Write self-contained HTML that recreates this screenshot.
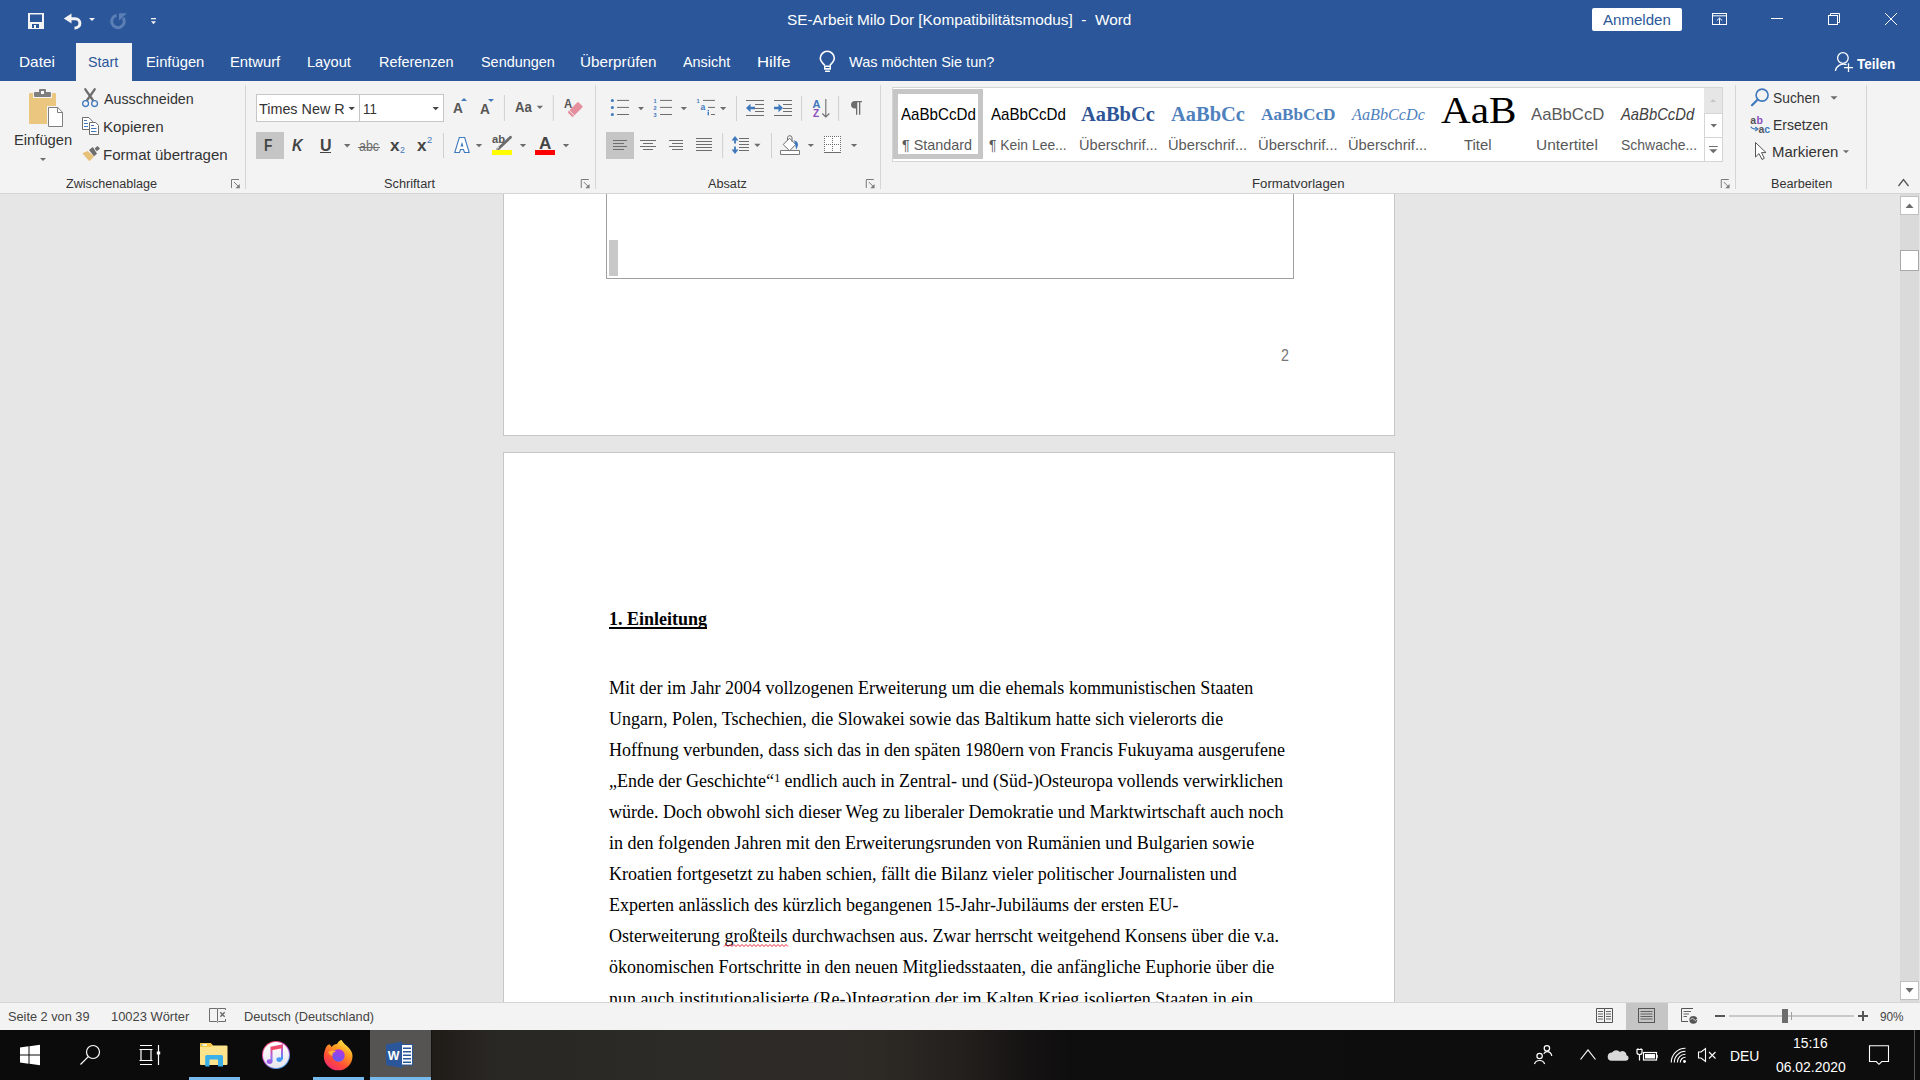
<!DOCTYPE html>
<html><head><meta charset="utf-8"><title>Word</title>
<style>
html,body{margin:0;padding:0;width:1920px;height:1080px;overflow:hidden;background:#e6e6e6;}
body{position:relative;font-family:'Liberation Sans', sans-serif;}
.t{position:absolute;white-space:pre;line-height:1;}
#docclip{position:absolute;left:0;top:194px;width:1920px;height:808px;overflow:hidden;}
#docin{position:absolute;left:0;top:-194px;width:1920px;height:1080px;}
</style></head><body>
<div style="position:absolute;left:0px;top:0px;width:1920px;height:81px;background:#2b579a;"></div><div style="position:absolute;left:76px;top:43px;width:56px;height:38px;background:#f3f3f3;"></div><div style="position:absolute;left:0px;top:81px;width:1920px;height:112px;background:#f3f3f3;"></div><div style="position:absolute;left:0px;top:193px;width:1920px;height:1px;background:#d5d5d5;"></div><div style="position:absolute;left:0px;top:194px;width:1920px;height:808px;background:#e6e6e6;"></div><div style="position:absolute;left:0px;top:1002px;width:1920px;height:1px;background:#d5d5d5;"></div><div style="position:absolute;left:0px;top:1003px;width:1920px;height:27px;background:#f3f3f3;"></div><div style="position:absolute;left:0px;top:1030px;width:1920px;height:50px;background:linear-gradient(90deg,#0b0b0b 0px,#0b0b0b 431px,#1f1b17 432px,#292724 490px,#2d2b28 700px,#2d2a26 880px,#24201d 960px,#151313 1025px,#0f0e0e 1070px,#0e0d0d 1920px);"></div><div style="position:absolute;left:1592px;top:8px;width:90px;height:23px;background:#ffffff;border-radius:2px;"></div><div style="position:absolute;left:256px;top:94px;width:104px;height:28px;background:#ffffff;box-sizing:border-box;border:1px solid #c6c6c6;"></div><div style="position:absolute;left:359px;top:94px;width:85px;height:28px;background:#ffffff;box-sizing:border-box;border:1px solid #c6c6c6;"></div><div style="position:absolute;left:256px;top:132px;width:28px;height:27px;background:#c5c5c5;"></div><div style="position:absolute;left:606px;top:132px;width:28px;height:27px;background:#c5c5c5;"></div><div style="position:absolute;left:245px;top:85px;width:1px;height:104px;background:#d5d5d5;"></div><div style="position:absolute;left:595px;top:85px;width:1px;height:104px;background:#d5d5d5;"></div><div style="position:absolute;left:880px;top:85px;width:1px;height:104px;background:#d5d5d5;"></div><div style="position:absolute;left:1735px;top:85px;width:1px;height:104px;background:#d5d5d5;"></div><div style="position:absolute;left:1866px;top:85px;width:1px;height:104px;background:#d5d5d5;"></div><div style="position:absolute;left:892px;top:87px;width:831px;height:75px;background:#ffffff;box-sizing:border-box;border:1px solid #d5d5d5;"></div><div style="position:absolute;left:893px;top:89px;width:90px;height:70px;background:transparent;box-sizing:border-box;border:5px solid #c6c6c6;"></div><div style="position:absolute;left:1704px;top:88px;width:18px;height:25px;background:#e6e6e6;"></div><div style="position:absolute;left:1704px;top:113px;width:1px;height:48px;background:#d5d5d5;"></div><div style="position:absolute;left:1704px;top:137px;width:18px;height:1px;background:#d5d5d5;"></div><div style="position:absolute;left:1704px;top:113px;width:18px;height:1px;background:#d5d5d5;"></div><div style="position:absolute;left:503px;top:194px;width:892px;height:242px;background:#ffffff;box-sizing:border-box;border:1px solid #c6c6c6;border-top:none;"></div><div style="position:absolute;left:503px;top:452px;width:892px;height:550px;background:#ffffff;box-sizing:border-box;border:1px solid #c6c6c6;border-bottom:none;"></div><div style="position:absolute;left:606px;top:194px;width:688px;height:85px;background:transparent;box-sizing:border-box;border:1px solid #a0a0a0;border-top:none;"></div><div style="position:absolute;left:609px;top:240px;width:9px;height:36px;background:#c8c8c8;"></div><div style="position:absolute;left:609px;top:627px;width:98px;height:2px;background:#000000;"></div><div style="position:absolute;left:1626px;top:1003px;width:42px;height:27px;background:#c5c5c5;"></div><div style="position:absolute;left:370px;top:1030px;width:61px;height:50px;background:#565452;"></div><div style="position:absolute;left:370px;top:1077px;width:61px;height:3px;background:#76b9ed;"></div><div style="position:absolute;left:189px;top:1077px;width:51px;height:3px;background:#76b9ed;"></div><div style="position:absolute;left:313px;top:1077px;width:51px;height:3px;background:#76b9ed;"></div><div style="position:absolute;left:320px;top:152px;width:11px;height:1.3px;background:#444444;"></div><div style="position:absolute;left:358px;top:147px;width:22px;height:1.2px;background:#6d6d6d;"></div>
<div id="docclip"><div id="docin"><div class="t" style="left:609.00px;top:610.00px;font:normal 700 18px 'Liberation Serif', serif;line-height:1;color:#000000;">1. Einleitung</div><div class="t" style="left:609.00px;top:679.00px;font:normal 400 18px 'Liberation Serif', serif;line-height:1;color:#000000;">Mit der im Jahr 2004 vollzogenen Erweiterung um die ehemals kommunistischen Staaten</div><div class="t" style="left:609.00px;top:710.05px;font:normal 400 18px 'Liberation Serif', serif;line-height:1;color:#000000;">Ungarn, Polen, Tschechien, die Slowakei sowie das Baltikum hatte sich vielerorts die</div><div class="t" style="left:609.00px;top:741.10px;font:normal 400 18px 'Liberation Serif', serif;line-height:1;color:#000000;">Hoffnung verbunden, dass sich das in den späten 1980ern von Francis Fukuyama ausgerufene</div><div class="t" style="left:609.00px;top:803.20px;font:normal 400 18px 'Liberation Serif', serif;line-height:1;color:#000000;">würde. Doch obwohl sich dieser Weg zu liberaler Demokratie und Marktwirtschaft auch noch</div><div class="t" style="left:609.00px;top:834.25px;font:normal 400 18px 'Liberation Serif', serif;line-height:1;color:#000000;">in den folgenden Jahren mit den Erweiterungsrunden von Rumänien und Bulgarien sowie</div><div class="t" style="left:609.00px;top:865.30px;font:normal 400 18px 'Liberation Serif', serif;line-height:1;color:#000000;">Kroatien fortgesetzt zu haben schien, fällt die Bilanz vieler politischer Journalisten und</div><div class="t" style="left:609.00px;top:896.35px;font:normal 400 18px 'Liberation Serif', serif;line-height:1;color:#000000;">Experten anlässlich des kürzlich begangenen 15-Jahr-Jubiläums der ersten EU-</div><div class="t" style="left:609.00px;top:927.40px;font:normal 400 18px 'Liberation Serif', serif;line-height:1;color:#000000;">Osterweiterung großteils durchwachsen aus. Zwar herrscht weitgehend Konsens über die v.a.</div><div class="t" style="left:609.00px;top:958.45px;font:normal 400 18px 'Liberation Serif', serif;line-height:1;color:#000000;">ökonomischen Fortschritte in den neuen Mitgliedsstaaten, die anfängliche Euphorie über die</div><div class="t" style="left:609.00px;top:989.50px;font:normal 400 18px 'Liberation Serif', serif;line-height:1;color:#000000;">nun auch institutionalisierte (Re-)Integration der im Kalten Krieg isolierten Staaten in ein</div><div class="t" style="left:609.00px;top:772.15px;font:normal 400 18px 'Liberation Serif', serif;line-height:1;color:#000000;">„Ende der Geschichte“</div><div class="t" style="left:774.20px;top:772.00px;font:normal 400 12px 'Liberation Serif', serif;line-height:1;color:#000000;">1</div><div class="t" style="left:784.60px;top:772.15px;font:normal 400 18px 'Liberation Serif', serif;line-height:1;color:#000000;">endlich auch in Zentral- und (Süd-)Osteuropa vollends verwirklichen</div></div></div>
<div class="t" style="left:787.00px;top:12.00px;font:normal 400 15px 'Liberation Sans', sans-serif;line-height:1;color:#ffffff;transform:scaleX(1.0233);transform-origin:0 0;">SE-Arbeit Milo Dor [Kompatibilitätsmodus]  -  Word</div><div class="t" style="left:1603.00px;top:12.00px;font:normal 400 15px 'Liberation Sans', sans-serif;line-height:1;color:#2b579a;transform:scaleX(1.0044);transform-origin:0 0;">Anmelden</div><div class="t" style="left:18.67px;top:54.00px;font:normal 400 15px 'Liberation Sans', sans-serif;line-height:1;color:#ffffff;transform:scaleX(1.0257);transform-origin:0 0;">Datei</div><div class="t" style="left:88.00px;top:54.00px;font:normal 400 15px 'Liberation Sans', sans-serif;line-height:1;color:#2b579a;transform:scaleX(0.9536);transform-origin:0 0;">Start</div><div class="t" style="left:145.72px;top:54.00px;font:normal 400 15px 'Liberation Sans', sans-serif;line-height:1;color:#ffffff;transform:scaleX(0.9849);transform-origin:0 0;">Einfügen</div><div class="t" style="left:230.31px;top:54.00px;font:normal 400 15px 'Liberation Sans', sans-serif;line-height:1;color:#ffffff;transform:scaleX(0.9865);transform-origin:0 0;">Entwurf</div><div class="t" style="left:307.33px;top:54.00px;font:normal 400 15px 'Liberation Sans', sans-serif;line-height:1;color:#ffffff;transform:scaleX(0.9739);transform-origin:0 0;">Layout</div><div class="t" style="left:378.54px;top:54.00px;font:normal 400 15px 'Liberation Sans', sans-serif;line-height:1;color:#ffffff;transform:scaleX(0.9619);transform-origin:0 0;">Referenzen</div><div class="t" style="left:480.50px;top:54.00px;font:normal 400 15px 'Liberation Sans', sans-serif;line-height:1;color:#ffffff;transform:scaleX(0.9620);transform-origin:0 0;">Sendungen</div><div class="t" style="left:579.98px;top:54.00px;font:normal 400 15px 'Liberation Sans', sans-serif;line-height:1;color:#ffffff;transform:scaleX(1.0176);transform-origin:0 0;">Überprüfen</div><div class="t" style="left:683.00px;top:54.00px;font:normal 400 15px 'Liberation Sans', sans-serif;line-height:1;color:#ffffff;transform:scaleX(0.9596);transform-origin:0 0;">Ansicht</div><div class="t" style="left:756.88px;top:54.00px;font:normal 400 15px 'Liberation Sans', sans-serif;line-height:1;color:#ffffff;transform:scaleX(1.1163);transform-origin:0 0;">Hilfe</div><div class="t" style="left:849.00px;top:54.00px;font:normal 400 15px 'Liberation Sans', sans-serif;line-height:1;color:#ffffff;transform:scaleX(0.9666);transform-origin:0 0;">Was möchten Sie tun?</div><div class="t" style="left:1857.20px;top:56.00px;font:normal 700 15px 'Liberation Sans', sans-serif;line-height:1;color:#ffffff;transform:scaleX(0.9057);transform-origin:0 0;">Teilen</div><div class="t" style="left:13.72px;top:132.00px;font:normal 400 15px 'Liberation Sans', sans-serif;line-height:1;color:#333333;transform:scaleX(0.9832);transform-origin:0 0;">Einfügen</div><div class="t" style="left:104.20px;top:91.00px;font:normal 400 15px 'Liberation Sans', sans-serif;line-height:1;color:#333333;transform:scaleX(0.9522);transform-origin:0 0;">Ausschneiden</div><div class="t" style="left:103.19px;top:119.00px;font:normal 400 15px 'Liberation Sans', sans-serif;line-height:1;color:#333333;transform:scaleX(1.0085);transform-origin:0 0;">Kopieren</div><div class="t" style="left:103.20px;top:147.00px;font:normal 400 15px 'Liberation Sans', sans-serif;line-height:1;color:#333333;transform:scaleX(1.0042);transform-origin:0 0;">Format übertragen</div><div class="t" style="left:66.10px;top:177.80px;font:normal 400 12px 'Liberation Sans', sans-serif;line-height:1;color:#333333;transform:scaleX(1.0500);transform-origin:0 0;">Zwischenablage</div><div class="t" style="left:384.00px;top:177.80px;font:normal 400 12px 'Liberation Sans', sans-serif;line-height:1;color:#333333;transform:scaleX(1.0631);transform-origin:0 0;">Schriftart</div><div class="t" style="left:708.00px;top:177.80px;font:normal 400 12px 'Liberation Sans', sans-serif;line-height:1;color:#333333;transform:scaleX(1.0563);transform-origin:0 0;">Absatz</div><div class="t" style="left:1252.00px;top:177.80px;font:normal 400 12px 'Liberation Sans', sans-serif;line-height:1;color:#333333;transform:scaleX(1.1006);transform-origin:0 0;">Formatvorlagen</div><div class="t" style="left:1770.50px;top:177.80px;font:normal 400 12px 'Liberation Sans', sans-serif;line-height:1;color:#333333;transform:scaleX(1.0546);transform-origin:0 0;">Bearbeiten</div><div class="t" style="left:259.00px;top:101.60px;font:normal 400 14px 'Liberation Sans', sans-serif;line-height:1;color:#333333;transform:scaleX(1.0255);transform-origin:0 0;">Times New R</div><div class="t" style="left:363.35px;top:101.60px;font:normal 400 14px 'Liberation Sans', sans-serif;line-height:1;color:#333333;transform:scaleX(0.9457);transform-origin:0 0;">11</div><div class="t" style="left:900.80px;top:105.60px;font:normal 400 17px 'Liberation Sans', sans-serif;line-height:1;color:#000000;transform:scaleX(0.8907);transform-origin:0 0;">AaBbCcDd</div><div class="t" style="left:902.40px;top:136.80px;font:normal 400 15px 'Liberation Sans', sans-serif;line-height:1;color:#595959;transform:scaleX(0.9593);transform-origin:0 0;">¶ Standard</div><div class="t" style="left:991.00px;top:105.60px;font:normal 400 17px 'Liberation Sans', sans-serif;line-height:1;color:#000000;transform:scaleX(0.8895);transform-origin:0 0;">AaBbCcDd</div><div class="t" style="left:989.40px;top:136.80px;font:normal 400 15px 'Liberation Sans', sans-serif;line-height:1;color:#595959;transform:scaleX(0.9254);transform-origin:0 0;">¶ Kein Lee...</div><div class="t" style="left:1081.00px;top:103.00px;font:normal 700 22px 'Liberation Serif', serif;line-height:1;color:#2e5597;transform:scaleX(0.9287);transform-origin:0 0;">AaBbCc</div><div class="t" style="left:1078.53px;top:136.80px;font:normal 400 15px 'Liberation Sans', sans-serif;line-height:1;color:#595959;transform:scaleX(0.9722);transform-origin:0 0;">Überschrif...</div><div class="t" style="left:1171.00px;top:104.00px;font:normal 700 20px 'Liberation Serif', serif;line-height:1;color:#4f81bd;transform:scaleX(1.0228);transform-origin:0 0;">AaBbCc</div><div class="t" style="left:1168.02px;top:136.80px;font:normal 400 15px 'Liberation Sans', sans-serif;line-height:1;color:#595959;transform:scaleX(0.9786);transform-origin:0 0;">Überschrif...</div><div class="t" style="left:1260.75px;top:106.00px;font:normal 700 17px 'Liberation Serif', serif;line-height:1;color:#4f81bd;transform:scaleX(1.0117);transform-origin:0 0;">AaBbCcD</div><div class="t" style="left:1258.02px;top:136.80px;font:normal 400 15px 'Liberation Sans', sans-serif;line-height:1;color:#595959;transform:scaleX(0.9849);transform-origin:0 0;">Überschrif...</div><div class="t" style="left:1351.70px;top:106.00px;font:italic 400 17px 'Liberation Serif', serif;line-height:1;color:#4f81bd;transform:scaleX(0.9528);transform-origin:0 0;">AaBbCcDc</div><div class="t" style="left:1348.02px;top:136.80px;font:normal 400 15px 'Liberation Sans', sans-serif;line-height:1;color:#595959;transform:scaleX(0.9786);transform-origin:0 0;">Überschrif...</div><div class="t" style="left:1441.00px;top:91.00px;font:normal 400 38px 'Liberation Serif', serif;line-height:1;color:#000000;transform:scaleX(1.0833);transform-origin:0 0;">AaB</div><div class="t" style="left:1463.75px;top:136.80px;font:normal 400 15px 'Liberation Sans', sans-serif;line-height:1;color:#595959;transform:scaleX(0.9928);transform-origin:0 0;">Titel</div><div class="t" style="left:1530.75px;top:106.00px;font:normal 400 17px 'Liberation Sans', sans-serif;line-height:1;color:#5a5a5a;transform:scaleX(0.9817);transform-origin:0 0;">AaBbCcD</div><div class="t" style="left:1536.47px;top:136.80px;font:normal 400 15px 'Liberation Sans', sans-serif;line-height:1;color:#595959;transform:scaleX(1.0308);transform-origin:0 0;">Untertitel</div><div class="t" style="left:1621.37px;top:106.00px;font:italic 400 17px 'Liberation Sans', sans-serif;line-height:1;color:#404040;transform:scaleX(0.8699);transform-origin:0 0;">AaBbCcDd</div><div class="t" style="left:1620.50px;top:136.80px;font:normal 400 15px 'Liberation Sans', sans-serif;line-height:1;color:#595959;transform:scaleX(0.9312);transform-origin:0 0;">Schwache...</div><div class="t" style="left:1773.00px;top:89.50px;font:normal 400 15px 'Liberation Sans', sans-serif;line-height:1;color:#333333;transform:scaleX(0.9202);transform-origin:0 0;">Suchen</div><div class="t" style="left:1772.82px;top:117.00px;font:normal 400 15px 'Liberation Sans', sans-serif;line-height:1;color:#333333;transform:scaleX(0.9291);transform-origin:0 0;">Ersetzen</div><div class="t" style="left:1772.01px;top:144.00px;font:normal 400 15px 'Liberation Sans', sans-serif;line-height:1;color:#333333;transform:scaleX(0.9947);transform-origin:0 0;">Markieren</div><div class="t" style="left:1281.00px;top:348.00px;font:normal 400 16px 'Liberation Sans', sans-serif;line-height:1;color:#767676;transform:scaleX(0.8889);transform-origin:0 0;">2</div><div class="t" style="left:8.10px;top:1009.80px;font:normal 400 13px 'Liberation Sans', sans-serif;line-height:1;color:#444444;transform:scaleX(0.9809);transform-origin:0 0;">Seite 2 von 39</div><div class="t" style="left:110.60px;top:1009.80px;font:normal 400 13px 'Liberation Sans', sans-serif;line-height:1;color:#444444;transform:scaleX(0.9933);transform-origin:0 0;">10023 Wörter</div><div class="t" style="left:244.32px;top:1009.80px;font:normal 400 13px 'Liberation Sans', sans-serif;line-height:1;color:#444444;transform:scaleX(0.9832);transform-origin:0 0;">Deutsch (Deutschland)</div><div class="t" style="left:1880.00px;top:1010.00px;font:normal 400 13px 'Liberation Sans', sans-serif;line-height:1;color:#444444;transform:scaleX(0.9070);transform-origin:0 0;">90%</div><div class="t" style="left:1730.44px;top:1048.80px;font:normal 400 14.5px 'Liberation Sans', sans-serif;line-height:1;color:#ffffff;transform:scaleX(0.9608);transform-origin:0 0;">DEU</div><div class="t" style="left:1793.35px;top:1036.40px;font:normal 400 14.5px 'Liberation Sans', sans-serif;line-height:1;color:#ffffff;transform:scaleX(0.9540);transform-origin:0 0;">15:16</div><div class="t" style="left:1776.00px;top:1059.80px;font:normal 400 14.5px 'Liberation Sans', sans-serif;line-height:1;color:#ffffff;transform:scaleX(0.9599);transform-origin:0 0;">06.02.2020</div><div class="t" style="left:264.44px;top:138.00px;font:normal 700 16px 'Liberation Sans', sans-serif;line-height:1;color:#444444;transform:scaleX(0.8556);transform-origin:0 0;">F</div><div class="t" style="left:291.90px;top:138.00px;font:italic 700 16px 'Liberation Sans', sans-serif;line-height:1;color:#444444;transform:scaleX(0.9231);transform-origin:0 0;">K</div><div class="t" style="left:320.00px;top:138.00px;font:normal 700 16px 'Liberation Sans', sans-serif;line-height:1;color:#444444;">U</div><div class="t" style="left:359.00px;top:139.00px;font:normal 400 14px 'Liberation Sans', sans-serif;line-height:1;color:#6d6d6d;transform:scaleX(0.8860);transform-origin:0 0;">abc</div><div class="t" style="left:389.80px;top:138.00px;font:normal 700 16px 'Liberation Sans', sans-serif;line-height:1;color:#444444;transform:scaleX(1.0778);transform-origin:0 0;">x</div><div class="t" style="left:399.50px;top:146.00px;font:normal 400 9px 'Liberation Sans', sans-serif;line-height:1;color:#3f78bd;transform:scaleX(0.9800);transform-origin:0 0;">2</div><div class="t" style="left:417.40px;top:138.00px;font:normal 700 16px 'Liberation Sans', sans-serif;line-height:1;color:#444444;transform:scaleX(1.0667);transform-origin:0 0;">x</div><div class="t" style="left:427.30px;top:135.80px;font:normal 400 9px 'Liberation Sans', sans-serif;line-height:1;color:#3f78bd;transform:scaleX(1.0400);transform-origin:0 0;">2</div><div class="t" style="left:453.30px;top:100.00px;font:normal 700 15px 'Liberation Sans', sans-serif;line-height:1;color:#555555;transform:scaleX(0.9091);transform-origin:0 0;">A</div><div class="t" style="left:480.40px;top:101.00px;font:normal 700 15px 'Liberation Sans', sans-serif;line-height:1;color:#555555;transform:scaleX(0.9091);transform-origin:0 0;">A</div><div class="t" style="left:514.60px;top:99.00px;font:normal 700 15px 'Liberation Sans', sans-serif;line-height:1;color:#555555;transform:scaleX(0.8773);transform-origin:0 0;">Aa</div><div class="t" style="left:564.00px;top:98.30px;font:normal 700 12px 'Liberation Sans', sans-serif;line-height:1;color:#555555;transform:scaleX(0.9444);transform-origin:0 0;">A</div><div class="t" style="left:492.40px;top:133.90px;font:normal 700 10.5px 'Liberation Sans', sans-serif;line-height:1;color:#555555;transform:scaleX(1.0642);transform-origin:0 0;">ab</div><div class="t" style="left:538.80px;top:134.60px;font:normal 700 17px 'Liberation Sans', sans-serif;line-height:1;color:#444444;transform:scaleX(1.0083);transform-origin:0 0;">A</div>
<svg width="1920" height="1080" viewBox="0 0 1920 1080" style="position:absolute;left:0;top:0"><path d="M28 13h16v16h-16z" fill="#f3f3f3"/><rect x="30" y="14.5" width="12" height="7.5" fill="#2b579a"/><rect x="32" y="24" width="7" height="4" fill="#2b579a"/><rect x="34" y="25" width="2" height="3" fill="#f3f3f3"/><path d="M63.8 18.5L71.5 13.6V23.4Z" fill="#f3f3f3"/><path d="M70 18.7H75.3A4.6 4.6 0 0 1 75.3 27.9H74.5" fill="none" stroke="#f3f3f3" stroke-width="3"/><path d="M89 18h6l-3.0 3z" fill="#f3f3f3"/><path d="M116.5 15.2A6.3 6.3 0 1 0 123.2 17.8" fill="none" stroke="#5b7eb5" stroke-width="3"/><path d="M119 13.2H126.8L119 20.8Z" fill="#5b7eb5"/><rect x="151" y="18" width="5" height="1.3" fill="#f3f3f3"/><path d="M151 21.2h5l-2.5 3z" fill="#f3f3f3"/><g fill="none" stroke="#fff" stroke-width="1"><rect x="1712.5" y="13.5" width="14" height="11"/><path d="M1712.5 15.8H1726.5"/><path d="M1719.5 25V18.2M1716.8 20.6L1719.5 18L1722.2 20.6"/><path d="M1771 18.5H1783"/><rect x="1828.5" y="15.5" width="9" height="9"/><path d="M1830.5 15.5V13.5H1839.5V22.5H1837.5"/><path d="M1885 13L1897 25M1897 13L1885 25"/></g><g fill="none" stroke="#fff" stroke-width="1.6"><path d="M824.8 65.5C822.5 63 820.3 61.2 820.3 58.3A7 7 0 0 1 834.3 58.3C834.3 61.2 832.1 63 829.8 65.5"/></g><rect x="824" y="65.5" width="7" height="4.2" fill="#fff"/><rect x="825.5" y="67" width="4" height="1" fill="#2b579a"/><rect x="825" y="70.6" width="5" height="1.5" rx="0.7" fill="#fff"/><g fill="none" stroke="#fff" stroke-width="1.3"><circle cx="1842.9" cy="58" r="5.3"/><path d="M1835.3 70.8A8.5 8.5 0 0 1 1846.5 64.6"/><path d="M1844 67.6H1853M1848.5 63.2V72"/></g><rect x="29" y="93" width="27" height="31" rx="1" fill="#ebc67f"/><rect x="33" y="91" width="19" height="7" fill="#f3f3f3"/><rect x="34" y="92" width="17" height="5" rx="1" fill="#7f7f7f"/><rect x="39" y="89" width="7" height="5" rx="1" fill="#7f7f7f"/><rect x="41" y="91" width="3" height="3" fill="#fff"/><rect x="47" y="106" width="17" height="22" fill="#f3f3f3"/><path d="M48.5 107.5H57.8L62.5 112.2V126.5H48.5Z" fill="#fff" stroke="#7f7f7f" stroke-width="1"/><path d="M57.5 107.5V112.5H62.5" fill="none" stroke="#7f7f7f" stroke-width="1"/><path d="M40 158h6l-3.0 3z" fill="#6d6d6d"/><g stroke="#6d6d6d" stroke-linecap="round"><path d="M85.3 89.3L92.8 100" stroke-width="2.3"/><path d="M94.7 89.3L87.2 100" stroke-width="2.3"/></g><g fill="none" stroke="#3f78bd" stroke-width="1.3"><circle cx="85.6" cy="103.6" r="2.9"/><circle cx="94.6" cy="103.6" r="2.9"/></g><g stroke="#6d6d6d" stroke-width="1" fill="#fff"><path d="M82.5 117.5H88.8L92.5 121.3V129.5H82.5Z"/><path d="M89.5 122.5H95.8L98.5 125.4V134.5H89.5Z"/></g><g stroke="#3f78bd" stroke-width="1"><path d="M84 120.5H87M84 123.5H88M84 126.5H88M91 125.5H94M91 128.5H96.5M91 131.5H96.5"/></g><path d="M82.3 153.3L87.6 151.1L94.1 156.4L89.4 161.2Z" fill="#e8c179"/><path d="M89 150L92.8 147L97 153.8L94 156.3Z" fill="#6d6d6d"/><path d="M94.6 148.6L97.5 146L100 148.6L96.9 151.3Z" fill="#6d6d6d"/><g fill="none" stroke="#7a7a7a" stroke-width="1"><path d="M231.5 188V179.5H239"/><path d="M234 182L238 186"/></g><path d="M235.5 188.3H239.8V184Z" fill="#7a7a7a"/><g fill="none" stroke="#7a7a7a" stroke-width="1"><path d="M581.25 188V179.5H588.75"/><path d="M583.75 182L587.75 186"/></g><path d="M585.25 188.3H589.55V184Z" fill="#7a7a7a"/><g fill="none" stroke="#7a7a7a" stroke-width="1"><path d="M866.25 188V179.5H873.75"/><path d="M868.75 182L872.75 186"/></g><path d="M870.25 188.3H874.55V184Z" fill="#7a7a7a"/><g fill="none" stroke="#7a7a7a" stroke-width="1"><path d="M1721.25 188V179.5H1728.75"/><path d="M1723.75 182L1727.75 186"/></g><path d="M1725.25 188.3H1729.55V184Z" fill="#7a7a7a"/><path d="M348.5 107h6.4l-3.2 3.2z" fill="#444"/><path d="M432.5 107h6.4l-3.2 3.2z" fill="#444"/><path d="M344 144h6.4l-3.2 3.4z" fill="#6d6d6d"/><path d="M475.8 143.9h6.4l-3.2 3.4z" fill="#6d6d6d"/><path d="M519.8 143.9h6.4l-3.2 3.4z" fill="#6d6d6d"/><path d="M562.8 143.9h6.4l-3.2 3.4z" fill="#6d6d6d"/><path d="M536.7 105.8h6.3l-3.15 3.2z" fill="#6d6d6d"/><path d="M461 101H467L464 98Z" fill="#3f78bd"/><path d="M488 99H494L491 102Z" fill="#3f78bd"/><rect x="503.9" y="95" width="1" height="26" fill="#d0d0d0"/><rect x="552.8" y="95" width="1" height="26" fill="#d0d0d0"/><rect x="443.0" y="133" width="1" height="25" fill="#d0d0d0"/><path d="M568.2 111.5L577.2 102.5Q578 101.7 578.8 102.5L582.3 106Q583 106.8 582.3 107.5L573.3 116.5Q572.5 117.3 571.7 116.5L568.2 113Q567.4 112.3 568.2 111.5Z" fill="#e58e9d"/><path d="M569.2 110.5L574.3 115.6" stroke="#f3f3f3" stroke-width="1"/><path d="M459.3 137.5H464.7L469.2 152.5H464.5L463.5 149.5H460.5L459.5 152.5H454.8Z" fill="#fff" stroke="#3f78bd" stroke-width="1.1"/><path d="M460.6 146.6L462 141.7L463.4 146.6Z" fill="#3f78bd"/><path d="M497.5 149.5L510.5 137.3" stroke="#6d6d6d" stroke-width="2.8" stroke-linecap="round"/><path d="M496.5 150L499 147" stroke="#f3f3f3" stroke-width="0.8"/><rect x="492" y="150" width="20" height="5" fill="#ffff00"/><rect x="535" y="150" width="20" height="5" fill="#ff0000"/><circle cx="612.4" cy="100.4" r="1.5" fill="#3f78bd"/><rect x="617" y="99.9" width="12" height="1" fill="#6d6d6d"/><rect x="660" y="99.9" width="12" height="1" fill="#6d6d6d"/><circle cx="612.4" cy="107.4" r="1.5" fill="#3f78bd"/><rect x="617" y="106.9" width="12" height="1" fill="#6d6d6d"/><rect x="660" y="106.9" width="12" height="1" fill="#6d6d6d"/><circle cx="612.4" cy="114.5" r="1.5" fill="#3f78bd"/><rect x="617" y="114.0" width="12" height="1" fill="#6d6d6d"/><rect x="660" y="114.0" width="12" height="1" fill="#6d6d6d"/><path d="M638 107h6l-3.0 3.2z" fill="#6d6d6d"/><path d="M680.7 107h6.3l-3.15 3.2z" fill="#6d6d6d"/><path d="M720 107h6.3l-3.15 3.2z" fill="#6d6d6d"/><g font-family="Liberation Sans" font-size="5.5" font-weight="700" fill="#3f78bd"><text x="653.5" y="103">1</text><text x="653.5" y="110">2</text><text x="653.5" y="117">3</text><text x="696.5" y="103">1</text></g><text x="700.5" y="110.3" font-family="Liberation Sans" font-size="8.5" font-weight="700" fill="#3f78bd">a</text><rect x="707.6" y="111.8" width="1.4" height="3.5" fill="#3f78bd"/><rect x="707.6" y="110" width="1.4" height="1.2" fill="#3f78bd"/><rect x="703" y="99.9" width="12" height="1" fill="#6d6d6d"/><rect x="708" y="106.9" width="7" height="1" fill="#6d6d6d"/><rect x="711" y="114" width="4" height="1" fill="#6d6d6d"/><rect x="736" y="96" width="1" height="25" fill="#d0d0d0"/><rect x="801.1" y="96" width="1" height="25" fill="#d0d0d0"/><rect x="838.1" y="96" width="1" height="25" fill="#d0d0d0"/><rect x="722.1" y="133" width="1" height="25" fill="#d0d0d0"/><rect x="771" y="133" width="1" height="25" fill="#d0d0d0"/><g fill="#6d6d6d"><rect x="746" y="100" width="18" height="1"/><rect x="755" y="104" width="9" height="1"/><rect x="755" y="108" width="9" height="1"/><rect x="755" y="111" width="9" height="1"/><rect x="746" y="115" width="18" height="1"/></g><g fill="#6d6d6d"><rect x="774" y="100" width="18" height="1"/><rect x="783" y="104" width="9" height="1"/><rect x="783" y="108" width="9" height="1"/><rect x="783" y="111" width="9" height="1"/><rect x="774" y="115" width="18" height="1"/></g><path d="M746 108L750.5 103.8V106.7H755V109.3H750.5V112.2Z" fill="#3f78bd"/><path d="M783 108L778.5 103.8V106.7H774V109.3H778.5V112.2Z" fill="#3f78bd"/><text x="812.5" y="107.8" font-family="Liberation Sans" font-size="11" font-weight="700" fill="#3f78bd">A</text><text x="813" y="117" font-family="Liberation Sans" font-size="10" font-weight="700" fill="#8b4fbd">Z</text><path d="M825.8 99V117M822.3 113.5L825.8 117L829.3 113.5" fill="none" stroke="#6d6d6d" stroke-width="1.1"/><path d="M862 101H855C852.5 101 851 102.5 851 104.7C851 107 852.5 108.5 855 108.5H856V114.8H857.3V102.3H859V114.8H860.3V102.3H862Z" fill="#6d6d6d"/><rect x="824" y="136" width="17" height="16" fill="#fff"/><g fill="#6d6d6d"><rect x="613" y="140" width="14" height="1"/><rect x="613" y="143" width="11" height="1"/><rect x="613" y="146" width="14" height="1"/><rect x="613" y="149" width="11" height="1"/><rect x="640" y="140" width="16" height="1"/><rect x="643" y="143" width="10" height="1"/><rect x="640" y="146" width="16" height="1"/><rect x="643" y="149" width="10" height="1"/><rect x="669" y="140" width="14" height="1"/><rect x="672" y="143" width="11" height="1"/><rect x="669" y="146" width="14" height="1"/><rect x="672" y="149" width="11" height="1"/><rect x="696" y="138" width="16" height="1"/><rect x="696" y="141" width="16" height="1"/><rect x="696" y="144" width="16" height="1"/><rect x="696" y="147" width="16" height="1"/><rect x="696" y="150" width="16" height="1"/><rect x="739" y="138" width="10" height="1"/><rect x="739" y="141" width="10" height="1"/><rect x="739" y="144" width="10" height="1"/><rect x="739" y="147" width="10" height="1"/><rect x="739" y="150" width="10" height="1"/></g><path d="M735 139V143.5M735 146.5V151" stroke="#3f78bd" stroke-width="1.8"/><path d="M731.5 140.5L735 136L738.5 140.5Z" fill="#3f78bd"/><path d="M731.5 149.5L735 154L738.5 149.5Z" fill="#3f78bd"/><path d="M754.2 143.7h6.3l-3.15 3.2z" fill="#6d6d6d"/><path d="M780.5 150.5H799.5V154.5H780.5Z" fill="#fff" stroke="#7a7a7a" stroke-width="1"/><path d="M783.2 144.5L789.5 138.2L795.8 144.5L789.5 150.8Z" fill="#fff" stroke="#6d6d6d" stroke-width="1"/><path d="M787.5 140.3V137.5A2.3 2.3 0 0 1 792 137.5V141.8" fill="none" stroke="#6d6d6d" stroke-width="1"/><path d="M794 140.2C796.5 140.8 798 142.5 798 144.5C798 146 797 148 796.3 149.8L795.2 144.7Z" fill="#3f78bd"/><path d="M807.7 144h6.3l-3.15 3z" fill="#6d6d6d"/><rect x="824" y="136" width="17" height="16" fill="#fff"/><g fill="#6d6d6d"><rect x="824" y="136" width="1" height="1"/><rect x="824" y="144" width="1" height="1"/><rect x="826" y="136" width="1" height="1"/><rect x="826" y="144" width="1" height="1"/><rect x="828" y="136" width="1" height="1"/><rect x="828" y="144" width="1" height="1"/><rect x="830" y="136" width="1" height="1"/><rect x="830" y="144" width="1" height="1"/><rect x="832" y="136" width="1" height="1"/><rect x="832" y="144" width="1" height="1"/><rect x="834" y="136" width="1" height="1"/><rect x="834" y="144" width="1" height="1"/><rect x="836" y="136" width="1" height="1"/><rect x="836" y="144" width="1" height="1"/><rect x="838" y="136" width="1" height="1"/><rect x="838" y="144" width="1" height="1"/><rect x="840" y="136" width="1" height="1"/><rect x="840" y="144" width="1" height="1"/><rect x="824" y="136" width="1" height="1"/><rect x="832" y="136" width="1" height="1"/><rect x="840" y="136" width="1" height="1"/><rect x="824" y="138" width="1" height="1"/><rect x="832" y="138" width="1" height="1"/><rect x="840" y="138" width="1" height="1"/><rect x="824" y="140" width="1" height="1"/><rect x="832" y="140" width="1" height="1"/><rect x="840" y="140" width="1" height="1"/><rect x="824" y="142" width="1" height="1"/><rect x="832" y="142" width="1" height="1"/><rect x="840" y="142" width="1" height="1"/><rect x="824" y="144" width="1" height="1"/><rect x="832" y="144" width="1" height="1"/><rect x="840" y="144" width="1" height="1"/><rect x="824" y="146" width="1" height="1"/><rect x="832" y="146" width="1" height="1"/><rect x="840" y="146" width="1" height="1"/><rect x="824" y="148" width="1" height="1"/><rect x="832" y="148" width="1" height="1"/><rect x="840" y="148" width="1" height="1"/><rect x="824" y="150" width="1" height="1"/><rect x="832" y="150" width="1" height="1"/><rect x="840" y="150" width="1" height="1"/></g><rect x="824" y="152" width="17" height="1" fill="#6d6d6d"/><path d="M850.9 144h6.3l-3.15 3z" fill="#6d6d6d"/><path d="M1710 102H1716L1713 99Z" fill="#c6c6c6"/><path d="M1710.5 124h6.5l-3.25 3.5z" fill="#6d6d6d"/><rect x="1709" y="146" width="8.7" height="1" fill="#6d6d6d"/><path d="M1709.3 149.3h8l-4.0 4z" fill="#6d6d6d"/><circle cx="1762.1" cy="95.1" r="6" fill="none" stroke="#3f78bd" stroke-width="1.6"/><path d="M1757.5 99.7L1752 105.2" stroke="#3f78bd" stroke-width="2.2" stroke-linecap="round"/><path d="M1830.5 96.3h7l-3.5 3.5z" fill="#6d6d6d"/><text x="1750.3" y="124" font-family="Liberation Sans" font-size="10.5" font-weight="700" fill="#555">a</text><text x="1756.4" y="124" font-family="Liberation Sans" font-size="10.5" font-weight="700" fill="#8b4fbd">b</text><text x="1758.5" y="133" font-family="Liberation Sans" font-size="10.5" font-weight="700" fill="#555">a</text><text x="1764.3" y="133" font-family="Liberation Sans" font-size="10.5" font-weight="700" fill="#3f78bd">c</text><path d="M1751 126.5C1751 128.5 1753 129 1757 129" fill="none" stroke="#3f78bd" stroke-width="1.2"/><path d="M1755.3 127L1758 129L1755.3 131" fill="none" stroke="#3f78bd" stroke-width="1.2"/><path d="M1755.5 142.5V157L1759 153.6L1762 159.5L1764.3 158.3L1761.5 152.6H1766Z" fill="#fff" stroke="#555" stroke-width="1" stroke-linejoin="round"/><path d="M1843 150.3h6l-3.0 3z" fill="#6d6d6d"/><path d="M1898.5 186L1903.5 179.5L1908.5 186" fill="none" stroke="#555" stroke-width="1.3"/><rect x="1900" y="194" width="19" height="808" fill="#dadada"/><rect x="1900.5" y="196.5" width="18" height="18" fill="#fff" stroke="#c0c0c0"/><path d="M1905.5 208H1913.5L1909.5 203.5Z" fill="#6d6d6d"/><rect x="1900.5" y="250.5" width="18" height="20" fill="#fff" stroke="#a8a8a8"/><rect x="1900.5" y="981.5" width="18" height="18" fill="#fff" stroke="#c0c0c0"/><path d="M1905.5 988H1913.5L1909.5 992.8Z" fill="#6d6d6d"/><g fill="none" stroke="#6d6d6d" stroke-width="1"><path d="M217.5 1008.5H209.5V1021.5H216.5L217.5 1022.5L218.5 1021.5H225.5V1019"/><path d="M217.5 1008.5V1021.5"/><path d="M218 1008.5H225.5V1010"/><path d="M220.3 1012.3L224.7 1016.7M224.7 1012.3L220.3 1016.7" stroke-width="1.5"/></g><g fill="none" stroke="#555" stroke-width="1"><path d="M1596.5 1008.5H1604.5V1022.5H1596.5Z"/><path d="M1604.5 1008.5H1612.5V1022.5H1604.5Z"/><path d="M1598 1011.5H1603M1598 1014H1603M1598 1016.5H1603M1598 1019H1603M1606 1011.5H1611M1606 1014H1611M1606 1016.5H1611M1606 1019H1611" stroke-width="0.9"/></g><g fill="none" stroke="#555" stroke-width="1"><rect x="1638.5" y="1008.5" width="16" height="14"/><path d="M1640.5 1011.5H1652.5M1640.5 1014H1652.5M1640.5 1016.5H1652.5M1640.5 1019H1652.5" stroke-width="0.9"/></g><g fill="none" stroke="#555" stroke-width="1"><path d="M1693 1008.5H1681.5V1021.5H1688"/><path d="M1683.5 1011.5H1691M1683.5 1014H1689M1683.5 1016.5H1687" stroke-width="0.9"/></g><circle cx="1693.3" cy="1019.8" r="3.9" fill="#555"/><path d="M1690.5 1019.5Q1692.5 1017 1694 1019.5T1697 1019" stroke="#f3f3f3" stroke-width="0.8" fill="none"/><rect x="1715" y="1015" width="10" height="2" fill="#555"/><rect x="1729" y="1015.5" width="125" height="1" fill="#a0a0a0"/><rect x="1782" y="1009" width="6" height="14" fill="#6d6d6d"/><rect x="1791" y="1012" width="1" height="8" fill="#a0a0a0"/><path d="M1858 1016H1868M1863 1011V1021" stroke="#555" stroke-width="2"/><g fill="#fff"><path d="M20 1047.5L28.5 1046.3V1054.5H20Z"/><path d="M29.5 1046.2L40 1044.7V1054.5H29.5Z"/><path d="M20 1055.5H28.5V1063.7L20 1062.5Z"/><path d="M29.5 1055.5H40V1065.3L29.5 1063.8Z"/></g><g fill="none" stroke="#fff" stroke-width="1.2"><circle cx="93" cy="1052" r="6.5"/><path d="M88.3 1056.7L80.5 1064.5"/></g><g fill="none" stroke="#fff" stroke-width="1.2"><path d="M140 1045.5H152M140 1064.5H152M141 1049.5H151V1060.5H141Z"/><path d="M139.5 1049.5H141M151 1049.5H152.5M139.5 1060.5H141M151 1060.5H152.5"/><path d="M158.5 1045V1065"/></g><rect x="156.8" y="1051.5" width="3.4" height="3" fill="#fff"/><path d="M200 1044A1 1 0 0 1 201 1043H210.5L213 1045.5H226.5A1 1 0 0 1 227.5 1046.5V1064A1 1 0 0 1 226.5 1065H201A1 1 0 0 1 200 1064Z" fill="#fde38c"/><path d="M200 1044A1 1 0 0 1 201 1043H210.5L213 1045.5L210.5 1047H200Z" fill="#f6c545"/><rect x="202" y="1044.3" width="5" height="1.4" fill="#fff"/><rect x="201.5" y="1044.3" width="1" height="1.4" fill="#3bb0e8"/><path d="M205.2 1066.5V1056.5A1.5 1.5 0 0 1 206.7 1055H221.5A1.5 1.5 0 0 1 223 1056.5V1066.5H218V1059.5H209.5V1066.5Z" fill="#3bb0e8"/><defs><linearGradient id="itg" x1="0.2" y1="0" x2="0.8" y2="1"><stop offset="0" stop-color="#fa4a5c"/><stop offset="0.5" stop-color="#c549d8"/><stop offset="1" stop-color="#2fb6f5"/></linearGradient><linearGradient id="itn" x1="0" y1="0" x2="0.3" y2="1"><stop offset="0" stop-color="#f5445f"/><stop offset="0.55" stop-color="#b85ee0"/><stop offset="1" stop-color="#4a8cf7"/></linearGradient><linearGradient id="itw" x1="0" y1="0" x2="0" y2="1"><stop offset="0" stop-color="#ffffff"/><stop offset="1" stop-color="#e6e6ec"/></linearGradient></defs><circle cx="276" cy="1055" r="14" fill="url(#itg)"/><circle cx="276" cy="1055" r="13" fill="url(#itw)"/><path d="M271.5 1061.5V1047.5L282 1045.5V1059.5" fill="none" stroke="url(#itn)" stroke-width="2"/><path d="M271.5 1047.5L282 1045.5V1048.3L271.5 1050.3Z" fill="#f24a63"/><ellipse cx="269.6" cy="1061.6" rx="2.9" ry="2.4" fill="#9a5fe8"/><ellipse cx="279.3" cy="1059.6" rx="2.9" ry="2.4" fill="#4a9af5"/><defs><linearGradient id="ffb" x1="0.8" y1="0" x2="0.2" y2="1"><stop offset="0" stop-color="#fff44f"/><stop offset="0.35" stop-color="#ff9a1f"/><stop offset="0.7" stop-color="#ff4a3a"/><stop offset="1" stop-color="#f0287a"/></linearGradient><linearGradient id="ffp" x1="0.7" y1="0" x2="0.3" y2="1"><stop offset="0" stop-color="#b833e1"/><stop offset="1" stop-color="#5b5ef5"/></linearGradient></defs><path d="M325 1050C326 1046 328 1044 330 1044.5L331.5 1047C333 1045 335 1044 337 1044C339 1041 340 1040 341.5 1040C343 1043 346 1045 348 1047C351 1050 352.5 1053 352.5 1056A14.3 14.3 0 0 1 323.8 1056C323.8 1054 324.3 1052 325 1050Z" fill="url(#ffb)"/><circle cx="338.5" cy="1055.5" r="6.2" fill="url(#ffp)"/><path d="M328 1052C331 1050 334 1050 336 1052C333 1052 332 1054 332.5 1056C330 1055 329 1053.5 328 1052Z" fill="#ffb13b"/><rect x="401.5" y="1044.5" width="11" height="20.5" fill="#fff" stroke="#2b579a" stroke-width="1"/><g fill="#2b579a"><rect x="403" y="1047.5" width="8" height="1.5"/><rect x="403" y="1051" width="8" height="1.5"/><rect x="403" y="1054.5" width="8" height="1.5"/><rect x="403" y="1058" width="8" height="1.5"/><rect x="403" y="1061.5" width="8" height="1.5"/></g><path d="M386 1044.5L402 1041.4V1068.1L386 1065Z" fill="#2b579a"/><text x="387.8" y="1059.8" font-family="Liberation Sans" font-size="12" font-weight="700" fill="#fff" textLength="11.7" lengthAdjust="spacingAndGlyphs">W</text><g fill="none" stroke="#fff" stroke-width="1.2"><circle cx="1539.6" cy="1056" r="2.7"/><path d="M1534.5 1064A5.2 4.6 0 0 1 1544.6 1064"/><circle cx="1546.9" cy="1048.3" r="2.7"/><path d="M1543.8 1053.7C1544.5 1052.3 1545.6 1051.6 1547 1051.6C1549.4 1051.6 1551.3 1053.2 1551.8 1056"/></g><path d="M1580.5 1059.5L1588 1050L1595.5 1059.5" fill="none" stroke="#fff" stroke-width="1.2"/><path d="M1611 1060.8H1626A2.8 2.8 0 0 0 1626.5 1055.3A4 4 0 0 0 1620 1052A5 5 0 0 0 1612 1052.5A4.2 4.2 0 0 0 1611 1060.8Z" fill="#d8d8d8"/><g fill="none" stroke="#fff" stroke-width="1.2"><rect x="1643.5" y="1052.5" width="13" height="7.5"/><path d="M1657 1055V1058" stroke-width="1.5"/><path d="M1638 1049.5V1048.3M1641 1049.5V1048.3M1637 1049.5H1642V1052.5C1642 1054 1641 1054.5 1639.5 1054.5C1638 1054.5 1637 1054 1637 1052.5ZM1639.5 1054.5V1060.5"/></g><rect x="1645" y="1054" width="10" height="4.5" fill="#fff"/><g fill="none" stroke="#fff" stroke-width="1.1"><path d="M1671.3 1062.5A14 14 0 0 1 1685.5 1048.3"/><path d="M1674.3 1062.5A11 11 0 0 1 1685.5 1051.3"/><path d="M1677.3 1062.5A8 8 0 0 1 1685.5 1054.3"/><path d="M1680.3 1062.5A5 5 0 0 1 1685.5 1057.3"/></g><circle cx="1684.5" cy="1061.5" r="1.4" fill="#fff"/><g fill="none" stroke="#fff" stroke-width="1.1"><path d="M1698.5 1052H1701L1705.5 1048.5V1061.5L1701 1058H1698.5Z"/><path d="M1709 1052L1715.5 1058.5M1715.5 1052L1709 1058.5"/></g><path d="M1869.5 1045.8H1888.5V1061.5H1881.8L1879 1064.3L1876.2 1061.5H1869.5Z" fill="none" stroke="#fff" stroke-width="1.1"/><rect x="1914" y="1030" width="1" height="50" fill="#555"/><path d="M724 946.5L726 944.5L728 946.5L730 944.5L732 946.5L734 944.5L736 946.5L738 944.5L740 946.5L742 944.5L744 946.5L746 944.5L748 946.5L750 944.5L752 946.5L754 944.5L756 946.5L758 944.5L760 946.5L762 944.5L764 946.5L766 944.5L768 946.5L770 944.5L772 946.5L774 944.5L776 946.5L778 944.5L780 946.5L782 944.5L784 946.5L786 944.5L788 946.5" fill="none" stroke="#e81123" stroke-width="0.9"/></svg>
</body></html>
